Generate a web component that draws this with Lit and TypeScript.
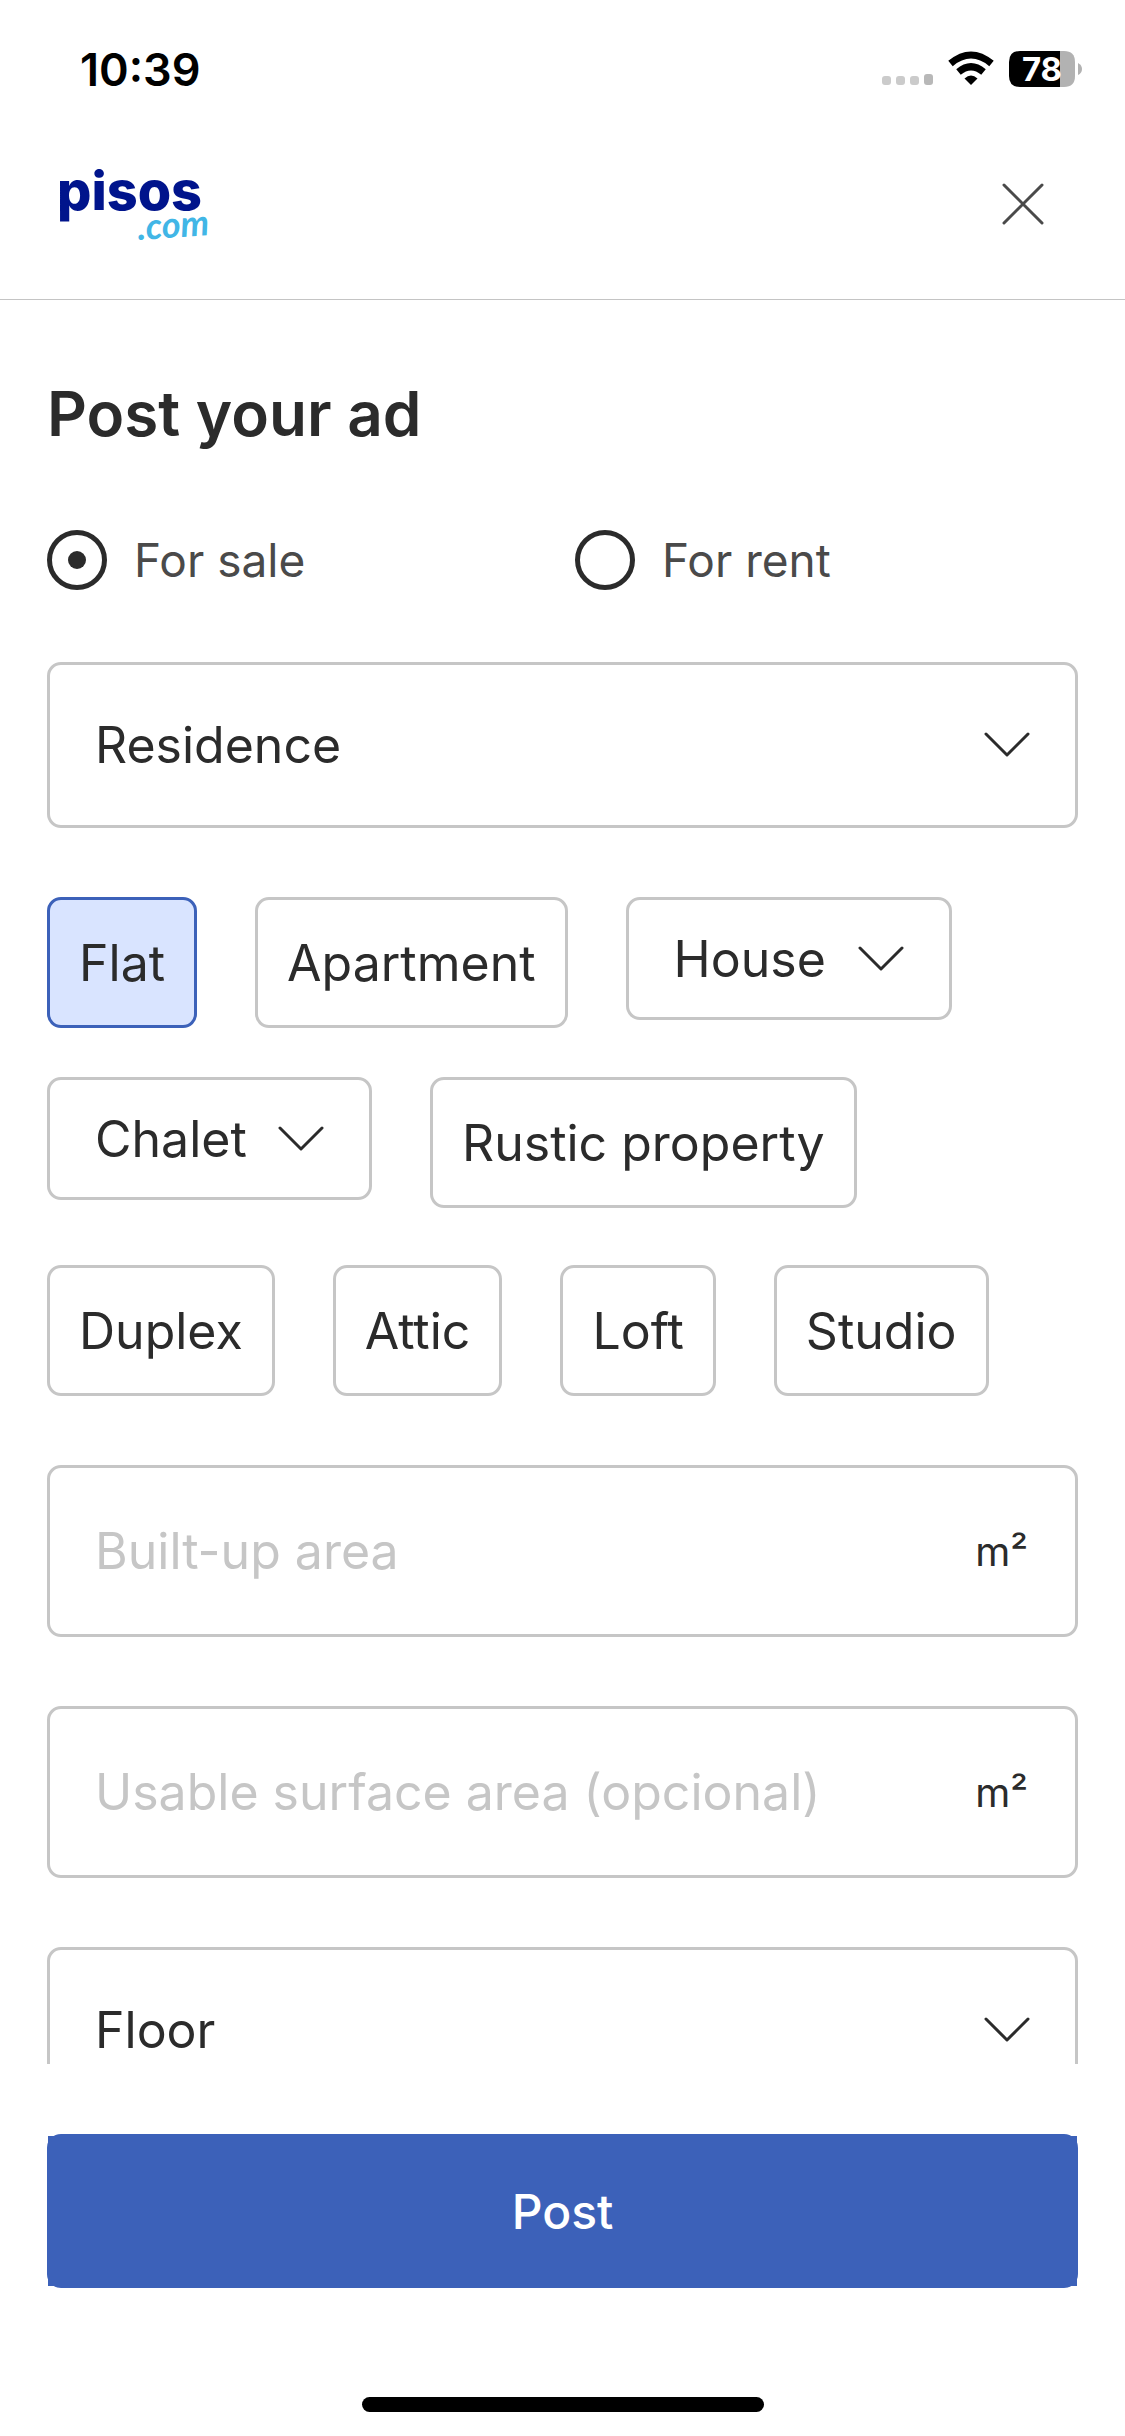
import { LitElement, html, css, svg } from "lit";
import { customElement, state } from "lit/decorators.js";
import { classMap } from "lit/directives/class-map.js";

interface Chip {
  label: string;
  menu?: boolean;
}

const CHIP_ROWS: Chip[][] = [
  [{ label: "Flat" }, { label: "Apartment" }, { label: "House", menu: true }],
  [{ label: "Chalet", menu: true }, { label: "Rustic property" }],
  [{ label: "Duplex" }, { label: "Attic" }, { label: "Loft" }, { label: "Studio" }],
];

const chevron = html`<svg class="chevron" viewBox="0 0 46 26" aria-hidden="true">
  ${svg`<path d="M2 2 L23 23 L44 2" />`}
</svg>`;

@customElement("app-root")
export class AppRoot extends LitElement {
  @state() private deal = "sale";
  @state() private kind = "Flat";

  static styles = css`
    :host {
      display: flex;
      flex-direction: column;
      height: 100vh;
      background: #fff;
      color: #2b2b2b;
      font-family: Inter, "Liberation Sans", sans-serif;
      font-size: 50px;
    }
    * {
      box-sizing: border-box;
    }
    button,
    input,
    select {
      font: inherit;
      color: inherit;
      margin: 0;
    }
    .status {
      flex: none;
      display: flex;
      align-items: center;
      justify-content: space-between;
      height: 138px;
      padding: 0 43px 0 80px;
      color: #000;
    }
    .clock {
      font-size: 45px;
      font-weight: 600;
    }
    .indicators {
      width: 200px;
      height: 48px;
    }
    .level {
      font-size: 33px;
      font-weight: 700;
    }
    .bar {
      flex: none;
      display: flex;
      justify-content: space-between;
      align-items: center;
      height: 162px;
      padding: 0 72px 29px 56px;
      border-bottom: 1px solid #c4c4c4;
    }
    .logo {
      display: block;
      width: 170px;
      height: 104px;
    }
    .logo svg {
      display: block;
      width: 100%;
      height: 100%;
    }
    .brand {
      font-size: 54px;
      font-weight: 800;
      fill: #00148c;
    }
    .domain {
      font-family: Lato, sans-serif;
      font-size: 36px;
      font-style: italic;
      font-weight: 700;
      fill: #41b6e6;
    }
    .close {
      display: flex;
      padding: 8px;
      border: 0;
      background: none;
    }
    .close svg {
      width: 44px;
      height: 44px;
      fill: none;
      stroke: #4a4a4a;
      stroke-width: 3;
      stroke-linecap: round;
    }
    main {
      flex: 1;
      min-height: 0;
      overflow-y: auto;
      scrollbar-width: none;
      padding: 78px 47px 0;
    }
    h1 {
      margin: 0 0 80px;
      font-size: 62px;
      line-height: 72px;
      font-weight: 600;
    }
    .deal {
      display: grid;
      grid-template-columns: 1fr 1fr;
      gap: 25px;
      margin: 0 0 72px;
      padding: 0;
      border: 0;
    }
    .option {
      display: flex;
      align-items: center;
      gap: 27px;
      font-size: 46px;
      line-height: 60px;
      color: #4a4a4a;
    }
    .option input {
      appearance: none;
      flex: none;
      display: grid;
      place-items: center;
      width: 60px;
      height: 60px;
      border: 5px solid #2b2b2b;
      border-radius: 50%;
    }
    .option input:checked::before {
      content: "";
      width: 18px;
      height: 18px;
      border-radius: 50%;
      background: #2b2b2b;
    }
    .fields {
      display: flex;
      flex-direction: column;
      gap: 69px;
    }
    .pick {
      display: grid;
      align-items: center;
    }
    .pick > * {
      grid-area: 1 / 1;
    }
    .pick select {
      appearance: none;
      width: 100%;
      height: 166px;
      padding: 0 122px 0 45px;
      border: 3px solid #c6c6c6;
      border-radius: 14px;
      background: #fff;
    }
    .pick.small select {
      height: 123px;
    }
    .chevron {
      justify-self: end;
      width: 46px;
      height: 26px;
      margin-right: 48px;
      fill: none;
      stroke: #2b2b2b;
      stroke-width: 3;
      stroke-linecap: round;
      stroke-linejoin: round;
      pointer-events: none;
    }
    .chips {
      display: flex;
      flex-direction: column;
      gap: 57px;
    }
    .row {
      display: flex;
      align-items: flex-start;
      gap: 58px;
    }
    .row:first-child {
      margin-bottom: -8px;
    }
    .chip {
      height: 131px;
      padding: 0 29px;
      border: 3px solid #c6c6c6;
      border-radius: 14px;
      background: #fff;
      white-space: nowrap;
    }
    .chip.on {
      border-color: #3c61b9;
      background: #d9e4ff;
    }
    .area {
      display: flex;
      align-items: center;
      height: 172px;
      padding: 0 47px 0 45px;
      border: 3px solid #c6c6c6;
      border-radius: 14px;
    }
    .area input {
      flex: 1;
      min-width: 0;
      height: 100%;
      padding: 0;
      border: 0;
      outline: 0;
      background: none;
    }
    .area input::placeholder {
      color: #c6c6c6;
      opacity: 1;
    }
    .unit {
      font-size: 40px;
    }
    footer {
      flex: none;
      padding: 70px 47px 24px;
    }
    .action {
      padding: 2px 1px;
      border-radius: 14px;
      background: #3c61b9;
    }
    .post {
      display: block;
      width: 100%;
      height: 150px;
      padding: 0;
      border: 0;
      background: #3c61b9;
      color: #fff;
      font-size: 48px;
      font-weight: 500;
    }
    .home {
      width: 402px;
      height: 15px;
      margin: 109px auto 0;
      border-radius: 8px;
      background: #000;
    }
  `;

  private renderChip(chip: Chip) {
    if (chip.menu) {
      return html`<div class="pick small">
        <select aria-label=${chip.label}>
          <option>${chip.label}</option>
        </select>
        ${chevron}
      </div>`;
    }
    const on = this.kind === chip.label;
    return html`<button
      type="button"
      class=${classMap({ chip: true, on })}
      aria-pressed=${on ? "true" : "false"}
      @click=${() => (this.kind = chip.label)}
    >${chip.label}</button>`;
  }

  private renderSelect(label: string) {
    return html`<div class="pick">
      <select aria-label=${label}>
        <option>${label}</option>
      </select>
      ${chevron}
    </div>`;
  }

  private renderArea(label: string) {
    return html`<label class="area">
      <input type="text" inputmode="numeric" placeholder=${label} aria-label=${label} />
      <span class="unit">m²</span>
    </label>`;
  }

  private renderDeal(value: string, label: string) {
    return html`<label class="option">
      <input
        type="radio"
        name="deal"
        .checked=${this.deal === value}
        @change=${() => (this.deal = value)}
      />
      <span>${label}</span>
    </label>`;
  }

  render() {
    return html`
      <div class="status">
        <span class="clock">10:39</span>
        <svg class="indicators" viewBox="0 -6 200 48">
          <g fill="#cbcbcb">
            <rect x="0" y="25" width="9" height="9" rx="3" />
            <rect x="14" y="25" width="9" height="9" rx="3" />
            <rect x="28" y="25" width="9" height="9" rx="3" />
          </g>
          <rect x="42" y="23" width="9" height="11" rx="3" fill="#b8b8b8" />
          <g fill="none" stroke="#000" stroke-width="7">
            <path d="M68.5 12.5 Q89 -4.5 109.5 12.5" />
            <path d="M76.5 21 Q89 10.5 101.5 21" />
          </g>
          <path d="M89 34 L82.5 27.5 Q89 21.5 95.5 27.5 Z" />
          <path d="M138 0 H179 V36 H138 Q127 36 127 25 V11 Q127 0 138 0 Z" />
          <path d="M178 0 H182 Q193 0 193 11 V25 Q193 36 182 36 H178 Z" fill="#b2b2b2" />
          <path d="M196 12 Q200 14 200 18 Q200 22 196 24 Z" fill="#b2b2b2" />
          <text class="level" x="160" y="30" text-anchor="middle" fill="#fff">78</text>
        </svg>
      </div>

      <header class="bar">
        <a class="logo" href="#" aria-label="pisos.com">
          <svg viewBox="0 -10 170 104">
            <text class="brand" x="1" y="48">pisos</text>
            <text class="domain" x="82" y="78" transform="rotate(-4 82 78)">.com</text>
          </svg>
        </a>
        <button class="close" type="button" aria-label="Close">
          <svg viewBox="0 0 44 44"><path d="M3 3 L41 41 M41 3 L3 41" /></svg>
        </button>
      </header>

      <main>
        <h1>Post your ad</h1>
        <fieldset class="deal" aria-label="Post your ad">
          ${this.renderDeal("sale", "For sale")} ${this.renderDeal("rent", "For rent")}
        </fieldset>
        <div class="fields">
          ${this.renderSelect("Residence")}
          <div class="chips">
            ${CHIP_ROWS.map(
              (row) => html`<div class="row">${row.map((chip) => this.renderChip(chip))}</div>`
            )}
          </div>
          ${this.renderArea("Built-up area")} ${this.renderArea("Usable surface area (opcional)")}
          ${this.renderSelect("Floor")}
        </div>
      </main>

      <footer>
        <div class="action">
          <button class="post" type="button">Post</button>
        </div>
        <div class="home"></div>
      </footer>
    `;
  }
}
